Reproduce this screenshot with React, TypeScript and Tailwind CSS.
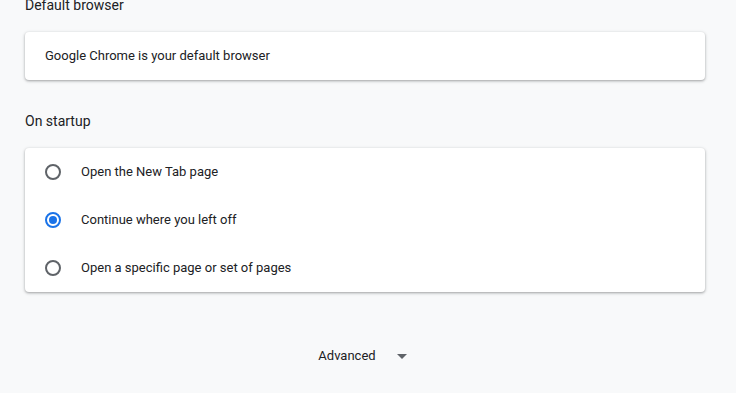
import { useState } from "react";

const options = [
  "Open the New Tab page",
  "Continue where you left off",
  "Open a specific page or set of pages",
];

function Radio({ checked }: { checked: boolean }) {
  return (
    <span
      className={`flex h-4 w-4 shrink-0 items-center justify-center rounded-full border-2 ${
        checked ? "border-[#1a73e8]" : "border-[#5f6368]"
      }`}
    >
      {checked && <span className="h-2 w-2 rounded-full bg-[#1a73e8]" />}
    </span>
  );
}

const card =
  "w-[680px] rounded bg-white shadow-[0_1px_2px_rgba(60,64,67,0.3),0_1px_3px_1px_rgba(60,64,67,0.15)]";

export default function App() {
  const [selected, setSelected] = useState(1);

  return (
    <div
      className="h-[393px] w-[736px] overflow-hidden bg-[#f8f9fa] text-[13px] text-[#202124]"
      style={{ fontFamily: "Roboto, 'Noto Sans', sans-serif" }}
    >
      <div className="-mt-[5px] ml-[25px]">
        <h2 className="mb-[17px] h-5 text-[14px] leading-5 font-normal">Default browser</h2>
        <div className={`${card} flex h-12 items-center px-5`}>Google Chrome is your default browser</div>

        <h2 className="mt-[31px] mb-[17px] h-5 text-[14px] leading-5 font-normal">On startup</h2>
        <div className={card}>
          {options.map((label, i) => (
            <button
              key={label}
              type="button"
              onClick={() => setSelected(i)}
              className="flex h-12 w-full items-center gap-5 px-5 text-left"
            >
              <Radio checked={selected === i} />
              <span>{label}</span>
            </button>
          ))}
        </div>
      </div>

      <div className="mt-[48px] flex justify-center pr-[11px]">
        <button type="button" className="flex h-8 items-center gap-[21px] text-[13px] text-[#202124]">
          <span>Advanced</span>
          <svg width="10" height="5" viewBox="0 0 10 5" className="fill-[#5f6368]">
            <path d="M0 0h10L5 5z" />
          </svg>
        </button>
      </div>
    </div>
  );
}
